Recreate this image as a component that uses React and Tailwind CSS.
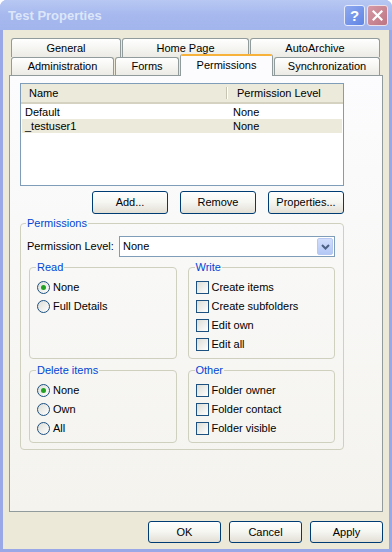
import React from "react";

const font = "font-['Liberation_Sans',Arial,sans-serif]";

function Tab({ label, w, active }) {
  if (active) {
    return (
      <div className={`${w} relative z-10 h-[22px] -mb-[1px] flex flex-col rounded-t-[3px] border-x border-[#919B9C] bg-[#FCFCFE] overflow-hidden`}>
        <div className="h-[2px] bg-[#F6B23A]" />
        <div className="flex-1 flex items-center justify-center pb-[2px]">{label}</div>
      </div>
    );
  }
  return (
    <div className={`${w} h-full flex items-center justify-center rounded-t-[3px] border border-b-0 border-[#919B9C] bg-linear-to-b from-white to-[#ECEBE5]`}>
      {label}
    </div>
  );
}

function XPButton({ w, h, children }) {
  return (
    <button className={`${w} ${h} flex items-center justify-center rounded-[3px] border border-[#003C74] bg-linear-to-b from-white via-[#F5F5F1] to-[#E2DFD5] text-[11px] text-black`}>
      {children}
    </button>
  );
}

function Group({ title, className, legendMl = "ml-[6px]", children }) {
  return (
    <fieldset className={`border border-[#D0D0BF] rounded-[4px] min-w-0 ${className}`}>
      <legend className={`${legendMl} px-[1px] leading-[13px] text-[#0046D5]`}>{title}</legend>
      {children}
    </fieldset>
  );
}

function Radio({ label, checked }) {
  return (
    <div className="flex items-center h-[19px]">
      <span className="w-[13px] h-[13px] rounded-full border border-[#1C5180] bg-linear-to-br from-[#DCDCD7] to-white flex items-center justify-center">
        {checked && <span className="w-[5px] h-[5px] rounded-full bg-[#21A121]" />}
      </span>
      <span className="ml-[3px]">{label}</span>
    </div>
  );
}

function Check({ label }) {
  return (
    <div className="flex items-center h-[19px]">
      <span className="w-[13px] h-[13px] border border-[#1C5180] bg-linear-to-br from-[#DCDCD7] to-white" />
      <span className="ml-[3px]">{label}</span>
    </div>
  );
}

export default function App() {
  return (
    <div className={`w-[392px] h-[552px] bg-white text-[11px] text-black ${font}`}>
      <div className="w-full h-full flex flex-col rounded-t-[7px] overflow-hidden bg-[#9AA8E8]">
        {/* title bar */}
        <div className="h-[30px] flex items-center pl-[8px] pr-[4px] bg-linear-to-b from-[#B8C8F3] via-[#A6B8EE] to-[#A2B5EC]">
          <span className="flex-1 text-[13px] font-bold text-[#DCE6F8] leading-none">Test Properties</span>
          <div className="flex gap-[2px]">
            <div className="w-[21px] h-[21px] rounded-[3px] border border-[#E6ECFB] bg-linear-to-br from-[#8FA9F0] to-[#5F84E4] flex items-center justify-center text-white font-bold text-[15px] leading-none">
              ?
            </div>
            <div className="w-[21px] h-[21px] rounded-[3px] border border-[#EDE0E6] bg-linear-to-br from-[#D59AA6] to-[#BE7482] flex items-center justify-center">
              <svg width="11" height="11" viewBox="0 0 11 11">
                <path d="M1.5 1.5 L9.5 9.5 M9.5 1.5 L1.5 9.5" stroke="white" strokeWidth="2.2" strokeLinecap="square" />
              </svg>
            </div>
          </div>
        </div>

        {/* body */}
        <div className="flex-1 mx-[3px] mb-[3px] bg-[#ECE9D8] flex flex-col px-[6px] pt-[8px]">
          <div className="flex gap-[1px] pl-[2px] h-[19px]">
            <Tab label="General" w="w-[110px]" />
            <Tab label="Home Page" w="w-[127px]" />
            <Tab label="AutoArchive" w="w-[130px]" />
          </div>
          <div className="flex items-end gap-[1px] pl-[2px] h-[18px]">
            <Tab label="Administration" w="w-[103px]" />
            <Tab label="Forms" w="w-[64px]" />
            <Tab label="Permissions" w="w-[93px]" active />
            <Tab label="Synchronization" w="w-[106px]" />
          </div>

          {/* tab panel */}
          <div className="h-[437px] border border-[#919B9C] bg-linear-to-b from-[#FCFCFE] to-[#F4F3EE] pl-[10px] pt-[7px]">
            <div className="w-[324px] flex flex-col">
              {/* list view */}
              <div className="h-[103px] border border-[#7F9DB9] bg-white flex flex-col">
                <div className="h-[20px] flex bg-[#EBEADB] border-b-[2px] border-[#D6D2C2] shrink-0">
                  <div className="w-[205px] flex items-center pl-[8px]">Name</div>
                  <div className="w-[2px] my-[3px] border-l border-[#C7C5B2] bg-white" />
                  <div className="flex-1 flex items-center pl-[9px]">Permission Level</div>
                </div>
                <div className="h-[14px] flex items-center mt-[1px]">
                  <div className="w-[205px] pl-[4px]">Default</div>
                  <div className="pl-[7px]">None</div>
                </div>
                <div className="h-[14px] flex items-center bg-[#EBEADB] mx-[1px]">
                  <div className="w-[204px] pl-[3px]">_testuser1</div>
                  <div className="pl-[7px]">None</div>
                </div>
              </div>

              <div className="mt-[5px] flex justify-end gap-[12px]">
                <XPButton w="w-[76px]" h="h-[23px]">Add...</XPButton>
                <XPButton w="w-[76px]" h="h-[23px]">Remove</XPButton>
                <XPButton w="w-[76px]" h="h-[23px]">Properties...</XPButton>
              </div>

              {/* permissions group */}
              <Group title="Permissions" legendMl="ml-[5px]" className="mt-[3px] pb-[6px]">
                <div className="mt-[6px] pl-[6px] pr-[8px] flex items-center">
                  <span className="w-[92px]">Permission Level:</span>
                  <div className="flex-1 h-[21px] border border-[#7F9DB9] bg-white flex items-center">
                    <span className="flex-1 pl-[3px]">None</span>
                    <div className="w-[16px] h-[17px] mr-[1px] rounded-[2px] bg-linear-to-b from-[#D2DEFB] to-[#B4C8F6] border border-[#B7C9F2] flex items-center justify-center">
                      <svg width="9" height="6" viewBox="0 0 9 6">
                        <path d="M1 1 L4.5 4.5 L8 1" fill="none" stroke="#4D6185" strokeWidth="2" />
                      </svg>
                    </div>
                  </div>
                </div>

                <div className="mt-[4px] px-[8px] grid grid-cols-2 gap-x-[11px] gap-y-[5px]">
                  <Group title="Read" className="h-[98px]">
                    <div className="pt-[4px] pl-[7px]">
                      <Radio label="None" checked />
                      <Radio label="Full Details" />
                    </div>
                  </Group>
                  <Group title="Write" className="h-[98px]">
                    <div className="pt-[4px] pl-[7px]">
                      <Check label="Create items" />
                      <Check label="Create subfolders" />
                      <Check label="Edit own" />
                      <Check label="Edit all" />
                    </div>
                  </Group>
                  <Group title="Delete items" className="h-[79px]">
                    <div className="pt-[4px] pl-[7px]">
                      <Radio label="None" checked />
                      <Radio label="Own" />
                      <Radio label="All" />
                    </div>
                  </Group>
                  <Group title="Other" className="h-[79px]">
                    <div className="pt-[4px] pl-[7px]">
                      <Check label="Folder owner" />
                      <Check label="Folder contact" />
                      <Check label="Folder visible" />
                    </div>
                  </Group>
                </div>
              </Group>
            </div>
          </div>

          <div className="mt-[9px] flex justify-end gap-[8px]">
            <XPButton w="w-[73px]" h="h-[22px]">OK</XPButton>
            <XPButton w="w-[73px]" h="h-[22px]">Cancel</XPButton>
            <XPButton w="w-[73px]" h="h-[22px]">Apply</XPButton>
          </div>
        </div>
      </div>
    </div>
  );
}
